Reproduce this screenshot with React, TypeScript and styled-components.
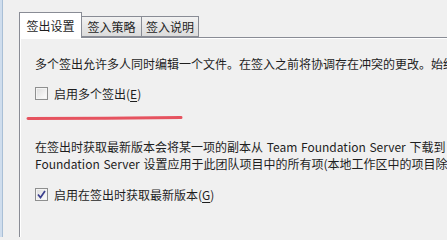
import React from 'react'
import styled, { createGlobalStyle } from 'styled-components'

const GlobalStyle = createGlobalStyle`
	html, body {
		margin: 0;
		padding: 0;
		background: #f0f0f0;
		overflow: hidden;
	}
	body {
		font-family: 'Noto Sans CJK SC', 'Noto Sans', sans-serif;
		font-size: 12px;
		color: #1e1e1e;
	}
`

const Frame = styled.div`
	display: flex;
	width: 447px;
	height: 237px;
	overflow: hidden;
`

const WindowEdge = styled.div`
	flex: 0 0 3px;
	background: linear-gradient(to right, #cfdded 0, #cfdded 2px, #a9bfd6 2px);
`

const Content = styled.div`
	flex: 1;
	padding: 12px 0 0 16px;
	min-width: 0;
`

const TabStrip = styled.div`
	display: flex;
	align-items: flex-end;
	height: 25px;
	position: relative;
	z-index: 1;
`

const Tab = styled.div<{ $active?: boolean; $width: number }>`
	box-sizing: border-box;
	width: ${(p) => p.$width}px;
	height: ${(p) => (p.$active ? 26 : 21)}px;
	margin-bottom: ${(p) => (p.$active ? -1 : 0)}px;
	border: 1px solid #898c95;
	border-bottom: ${(p) => (p.$active ? 'none' : '1px solid #898c95')};
	border-left: ${(p) => (p.$active ? '1px solid #898c95' : 'none')};
	background: ${(p) =>
		p.$active ? '#ffffff' : 'linear-gradient(#f2f2f2, #e6e6e6 50%, #dcdcdc)'};
	display: flex;
	align-items: center;
	justify-content: center;
	padding-bottom: ${(p) => (p.$active ? 1 : 0)}px;
	line-height: 17px;
	white-space: nowrap;
`

const Panel = styled.div`
	border-top: 1px solid #898c95;
	border-left: 1px solid #898c95;
	box-shadow: inset 1px 1px 0 #ffffff;
	background: #f0f0f0;
	height: 300px;
	padding: 17px 0 0 15px;
	white-space: nowrap;
`

const Paragraph = styled.div`
	line-height: 17px;
`

const Latin = styled.span`
	word-spacing: 1px;
`

const CheckRow = styled.label<{ $top: number }>`
	display: flex;
	align-items: center;
	gap: 6px;
	height: 17px;
	margin-top: ${(p) => p.$top}px;
	line-height: 17px;
`

const Box = styled.span`
	box-sizing: border-box;
	width: 13px;
	height: 13px;
	border: 1px solid #8e8f8f;
	background: linear-gradient(135deg, #dcdcdc, #ffffff);
	box-shadow: inset 0 0 0 1px #f4f4f4;
	display: flex;
	align-items: center;
	justify-content: center;
`

const Mnemonic = styled.span`
	text-decoration: underline;
	text-underline-offset: 2px;
`

const Annotation = styled.svg`
	display: block;
	margin: 13px 0 17px -9px;
`

const CheckBox = ({ checked }: { checked?: boolean }) => (
	<Box>
		{checked && (
			<svg width="9" height="9" viewBox="0 0 9 9">
				<path
					d="M1 4.5 L3.5 7.5 L8 1"
					fill="none"
					stroke="#3b3f8e"
					strokeWidth="1.7"
				/>
			</svg>
		)}
	</Box>
)

export default function App() {
	return (
		<>
			<GlobalStyle />
			<Frame>
				<WindowEdge />
				<Content>
					<TabStrip>
						<Tab $active $width={63}>签出设置</Tab>
						<Tab $width={60}>签入策略</Tab>
						<Tab $width={57}>签入说明</Tab>
					</TabStrip>
					<Panel>
						<Paragraph>
							多个签出允许多人同时编辑一个文件。在签入之前将协调存在冲突的更改。始终
						</Paragraph>
						<CheckRow $top={13}>
							<CheckBox />
							<span>
								启用多个签出(<Mnemonic>E</Mnemonic>)
							</span>
						</CheckRow>
						<Annotation width="160" height="6" viewBox="0 0 160 6">
							<path
								d="M2 3.6 Q40 3.4 80 3.2 T155 2.6"
								fill="none"
								stroke="#e4414f"
								strokeWidth="3"
								strokeLinecap="round"
								opacity="0.9"
							/>
						</Annotation>
						<Paragraph>
							在签出时获取最新版本会将某一项的副本从<Latin> Team Foundation Server </Latin>下载到
							<br />
							<Latin>Foundation Server </Latin>设置应用于此团队项目中的所有项(本地工作区中的项目除外)
						</Paragraph>
						<CheckRow $top={14}>
							<CheckBox checked />
							<span>
								启用在签出时获取最新版本(<Mnemonic>G</Mnemonic>)
							</span>
						</CheckRow>
					</Panel>
				</Content>
			</Frame>
		</>
	)
}
